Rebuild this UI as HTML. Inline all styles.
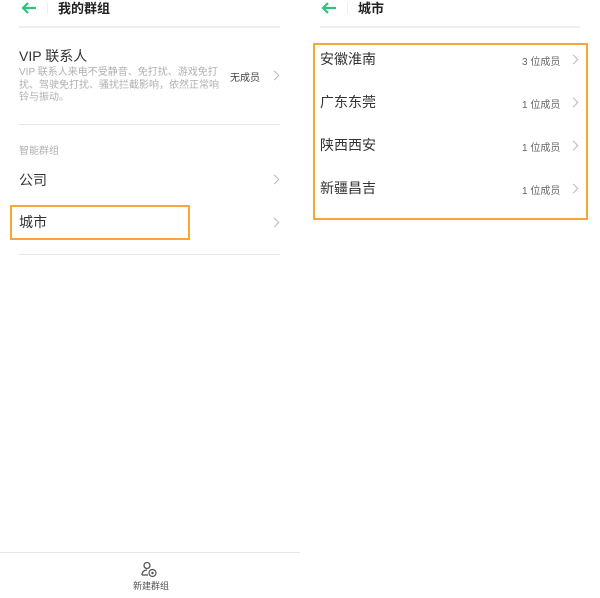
<!DOCTYPE html>
<html><head><meta charset="utf-8"><style>
*{margin:0;padding:0;box-sizing:border-box}
body{width:600px;height:598px;background:#fff;position:relative;overflow:hidden;font-family:"Liberation Sans","Noto Sans CJK SC",sans-serif;color:#333}
.a{position:absolute;white-space:nowrap}
.t{font-size:13px;font-weight:bold;color:#222}
.row{font-size:14px;color:#333}
.g{color:#b0b0b0;font-size:10px}
.c{color:#666;font-size:10px}
.hr{position:absolute;height:1px;background:#e6e6e6}
.chev{position:absolute;width:7px;height:7px;border-top:1.3px solid #bbb;border-right:1.3px solid #bbb;transform:rotate(45deg)}
.box{position:absolute;border:2px solid #f7a73a}
</style></head><body>
<svg class="a" style="left:21px;top:2px" width="16" height="12" viewBox="0 0 16 12"><path d="M15 6H2M7 1L2 6l5 5" stroke="#2ec27e" stroke-width="2.2" fill="none"/></svg>
<div class="a" style="left:47px;top:3px;width:1px;height:11px;background:#eee"></div>
<div class="a t" style="left:58px;top:-2px">我的群组</div>
<div class="hr" style="left:19px;top:26px;width:261px;height:2px;background:#eee"></div>
<div class="a row" style="left:19px;top:46px;font-size:14px">VIP 联系人</div>
<div class="a g" style="left:19px;top:67px;line-height:12.5px;white-space:normal;width:205px">VIP 联系人来电不受静音、免打扰、游戏免打扰、驾驶免打扰、骚扰拦截影响，依然正常响铃与振动。</div>
<div class="a c" style="left:230px;top:69px;color:#444">无成员</div>
<div class="chev" style="left:271px;top:72px"></div>
<div class="hr" style="left:19px;top:124px;width:261px"></div>
<div class="a g" style="left:19px;top:142px">智能群组</div>
<div class="a row" style="left:19px;top:170px">公司</div>
<div class="chev" style="left:271px;top:176px"></div>
<div class="box" style="left:10px;top:205px;width:180px;height:35px"></div>
<div class="a row" style="left:19px;top:212px">城市</div>
<div class="chev" style="left:271px;top:219px"></div>
<div class="hr" style="left:19px;top:254px;width:261px"></div>
<div class="hr" style="left:0;top:552px;width:300px"></div>
<svg class="a" style="left:141px;top:561px" width="17" height="17" viewBox="0 0 17 17"><circle cx="6" cy="4.5" r="3" stroke="#555" stroke-width="1.3" fill="none"/><path d="M1 14c0-3 2-5 5-5" stroke="#555" stroke-width="1.3" fill="none"/><path d="M1 14h6" stroke="#555" stroke-width="1.3"/><circle cx="11.5" cy="12" r="3.5" stroke="#555" stroke-width="1.2" fill="none"/><circle cx="11.5" cy="12" r="1.2" fill="#555"/></svg>
<div class="a" style="left:133px;top:579px;font-size:9px;color:#555">新建群组</div>

<svg class="a" style="left:321px;top:2px" width="16" height="12" viewBox="0 0 16 12"><path d="M15 6H2M7 1L2 6l5 5" stroke="#2ec27e" stroke-width="2.2" fill="none"/></svg>
<div class="a" style="left:347px;top:3px;width:1px;height:11px;background:#eee"></div>
<div class="a t" style="left:358px;top:-2px">城市</div>
<div class="hr" style="left:320px;top:26px;width:260px;height:2px;background:#eee"></div>
<div class="box" style="left:313px;top:43px;width:275px;height:177px"></div>
<div class="a row" style="left:320px;top:49px">安徽淮南</div>
<div class="a c" style="left:522px;top:53px">3 位成员</div>
<div class="chev" style="left:570px;top:56px"></div>
<div class="a row" style="left:320px;top:92px">广东东莞</div>
<div class="a c" style="left:522px;top:96px">1 位成员</div>
<div class="chev" style="left:570px;top:99px"></div>
<div class="a row" style="left:320px;top:135px">陕西西安</div>
<div class="a c" style="left:522px;top:139px">1 位成员</div>
<div class="chev" style="left:570px;top:142px"></div>
<div class="a row" style="left:320px;top:178px">新疆昌吉</div>
<div class="a c" style="left:522px;top:182px">1 位成员</div>
<div class="chev" style="left:570px;top:185px"></div>
</body></html>
